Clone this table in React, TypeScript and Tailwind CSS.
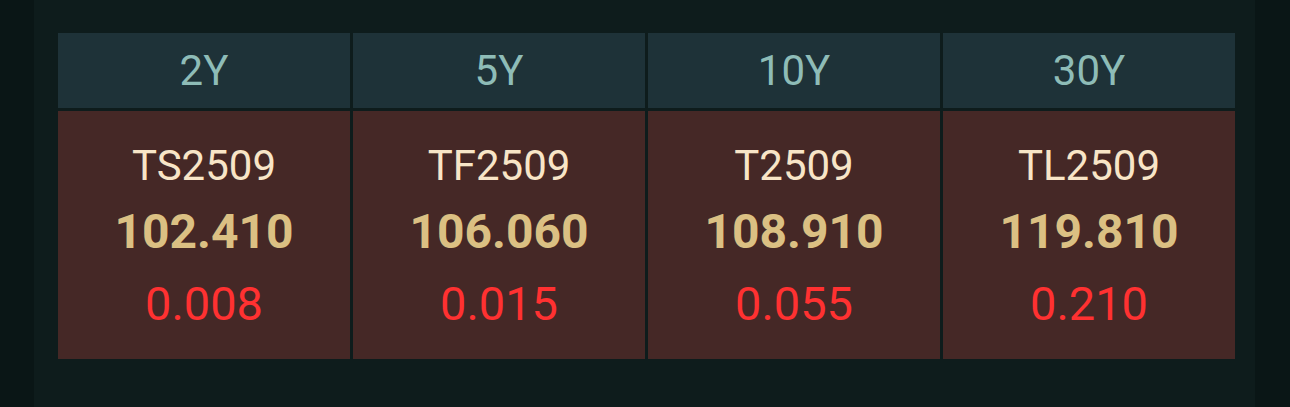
const rows = [
  { tenor: "2Y", code: "TS2509", price: "102.410", change: "0.008" },
  { tenor: "5Y", code: "TF2509", price: "106.060", change: "0.015" },
  { tenor: "10Y", code: "T2509", price: "108.910", change: "0.055" },
  { tenor: "30Y", code: "TL2509", price: "119.810", change: "0.210" },
];

const App = () => {
  return (
    <div className="w-[1290px] h-[407px] bg-[#0a1616] flex font-['Roboto','Liberation_Sans',sans-serif]">
      <div className="ml-[34px] w-[1221px] h-full bg-[#0e1c1c] pt-[33px] pl-[24px] pr-[20px]">
        <div className="grid grid-cols-4 gap-x-[3px] gap-y-[3px]">
          {rows.map((r) => (
            <div
              key={r.tenor + "h"}
              className="h-[75px] bg-[#1e3238] flex items-center justify-center text-[42px] text-[#8ebcb7]"
            >
              {r.tenor}
            </div>
          ))}
          {rows.map((r) => (
            <div
              key={r.tenor + "b"}
              className="h-[248px] pt-[5px] bg-[#452826] flex flex-col items-center justify-center"
            >
              <div className="text-[42px] leading-[62px] text-[#f8e5c7]">{r.code}</div>
              <div className="text-[48px] leading-[70px] font-bold text-[#dbc083]">{r.price}</div>
              <div className="text-[47px] leading-[74px] text-[#ff3131]">{r.change}</div>
            </div>
          ))}
        </div>
      </div>
    </div>
  );
};

export default App;
